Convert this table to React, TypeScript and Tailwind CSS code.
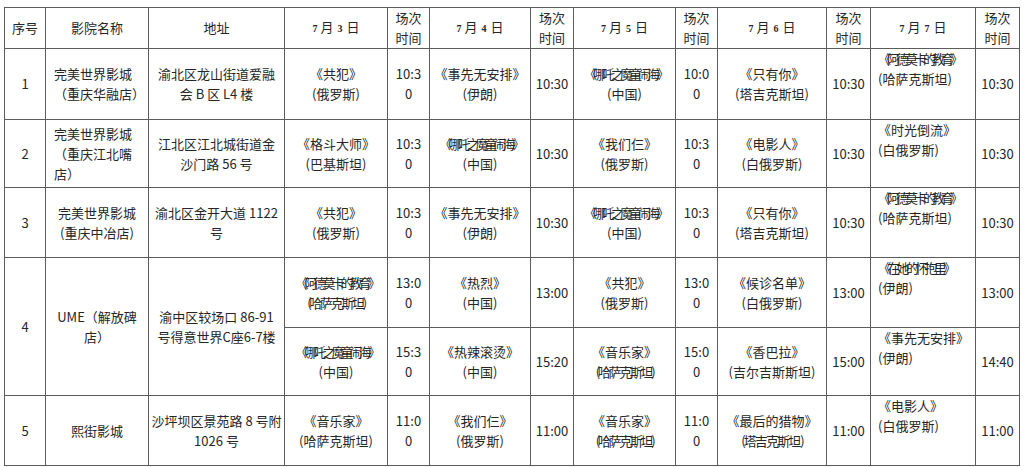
import React from "react";

type Line = string | { t: string; c: string };

const L = (t: string, c: string): Line => ({ t, c });

function Lines({ lines }: { lines: Line[] }) {
  return (
    <>
      {lines.map((l, i) => (
        <div key={i} className="whitespace-nowrap">
          {typeof l === "string" ? l : <span className={l.c}>{l.t}</span>}
        </div>
      ))}
    </>
  );
}

const td = "border border-[#5c5c5c] p-0 text-center align-middle leading-[20px]";
const tdTop = "border border-[#5c5c5c] p-0 pl-[7px] text-left align-top leading-[20px]";

const C4 = "tracking-[-4px]";
const C375 = "tracking-[-3.7px]";
const C23 = "tracking-[-2.3px]";
const C19 = "tracking-[-1.9px]";

function DateHead({ d }: { d: string }) {
  return (
    <span>
      <span className="font-['Liberation_Serif'] text-[10px] font-bold mr-[3px]">7</span>月
      <span className="font-['Liberation_Serif'] text-[10px] font-bold mx-[4px]">{d}</span>日
    </span>
  );
}

function Movie({ lines, top }: { lines: Line[]; top?: boolean }) {
  return (
    <td className={top ? tdTop : td}>
      <Lines lines={lines} />
    </td>
  );
}

function Time({ v }: { v: string }) {
  const parts = v.split("|");
  return (
    <td className={td}>
      {parts.map((p, i) => (
        <div key={i}>{p}</div>
      ))}
    </td>
  );
}

export default function App() {
  const cols = [41, 103, 136, 103, 42, 101, 43, 102, 42, 109, 44, 105, 44];
  return (
    <div className="w-[1024px] h-[467px] bg-white pl-[4px] pt-[7px] text-[13px] text-[#262626] font-['Noto_Sans_CJK_SC','Noto_Sans',sans-serif] overflow-hidden">
      <table className="table-fixed border-collapse">
        <colgroup>
          {cols.map((w, i) => (
            <col key={i} style={{ width: w }} />
          ))}
        </colgroup>
        <tbody>
          <tr className="h-[39px]">
            <td className={td}>序号</td>
            <td className={td}>影院名称</td>
            <td className={td}>地址</td>
            <td className={td}><DateHead d="3" /></td>
            <td className={td}><div>场次</div><div>时间</div></td>
            <td className={td}><DateHead d="4" /></td>
            <td className={td}><div>场次</div><div>时间</div></td>
            <td className={td}><DateHead d="5" /></td>
            <td className={td}><div>场次</div><div>时间</div></td>
            <td className={td}><DateHead d="6" /></td>
            <td className={td}><div>场次</div><div>时间</div></td>
            <td className={td}><DateHead d="7" /></td>
            <td className={td}><div>场次</div><div>时间</div></td>
          </tr>
          <tr className="h-[71px]">
            <td className={td}>1</td>
            <td className={`${td} !text-left pl-[8px]`}>
              <div>完美世界影城</div>
              <div>（重庆华融店）</div>
            </td>
            <td className={td}><Lines lines={["渝北区龙山街道爱融", "会 B 区 L4 楼"]} /></td>
            <Movie lines={["《共犯》", "(俄罗斯)"]} />
            <Time v="10:3|0" />
            <Movie lines={["《事先无安排》", "(伊朗)"]} />
            <Time v="10:30" />
            <Movie lines={[L("《哪吒之魔童闹海》", C4), "(中国)"]} />
            <Time v="10:0|0" />
            <Movie lines={["《只有你》", "(塔吉克斯坦)"]} />
            <Time v="10:30" />
            <Movie top lines={[L("《阿德莫卡的教育》", C4), "(哈萨克斯坦)"]} />
            <Time v="10:30" />
          </tr>
          <tr className="h-[68px]">
            <td className={td}>2</td>
            <td className={`${td} !text-left pl-[8px]`}>
              <div>完美世界影城</div>
              <div>（重庆江北嘴</div>
              <div>店）</div>
            </td>
            <td className={td}><Lines lines={["江北区江北城街道金", "沙门路 56 号"]} /></td>
            <Movie lines={["《格斗大师》", "(巴基斯坦)"]} />
            <Time v="10:3|0" />
            <Movie lines={[L("《哪吒之魔童闹海》", C4), "(中国)"]} />
            <Time v="10:30" />
            <Movie lines={["《我们仨》", "(俄罗斯)"]} />
            <Time v="10:3|0" />
            <Movie lines={["《电影人》", "(白俄罗斯)"]} />
            <Time v="10:30" />
            <Movie top lines={["《时光倒流》", "(白俄罗斯)"]} />
            <Time v="10:30" />
          </tr>
          <tr className="h-[70px]">
            <td className={td}>3</td>
            <td className={td}><Lines lines={["完美世界影城", "(重庆中冶店)"]} /></td>
            <td className={td}><Lines lines={["渝北区金开大道 1122", "号"]} /></td>
            <Movie lines={["《共犯》", "(俄罗斯)"]} />
            <Time v="10:3|0" />
            <Movie lines={["《事先无安排》", "(伊朗)"]} />
            <Time v="10:30" />
            <Movie lines={[L("《哪吒之魔童闹海》", C4), "(中国)"]} />
            <Time v="10:3|0" />
            <Movie lines={["《只有你》", "(塔吉克斯坦)"]} />
            <Time v="10:30" />
            <Movie top lines={[L("《阿德莫卡的教育》", C4), "(哈萨克斯坦)"]} />
            <Time v="10:30" />
          </tr>
          <tr className="h-[70px]">
            <td rowSpan={2} className={td}>4</td>
            <td rowSpan={2} className={td}><Lines lines={["UME（解放碑", "店）"]} /></td>
            <td rowSpan={2} className={td}><Lines lines={["渝中区较场口 86-91", "号得意世界C座6-7楼"]} /></td>
            <Movie lines={[L("《阿德莫卡的教育》", C4), L("(哈萨克斯坦)", C23)]} />
            <Time v="13:0|0" />
            <Movie lines={["《热烈》", "(中国)"]} />
            <Time v="13:00" />
            <Movie lines={["《共犯》", "(俄罗斯)"]} />
            <Time v="13:0|0" />
            <Movie lines={["《候诊名单》", "(白俄罗斯)"]} />
            <Time v="13:00" />
            <Movie top lines={[L("《在她的怀抱里》", C375), "(伊朗)"]} />
            <Time v="13:00" />
          </tr>
          <tr className="h-[68px]">
            <Movie lines={[L("《哪吒之魔童闹海》", C4), "(中国)"]} />
            <Time v="15:3|0" />
            <Movie lines={["《热辣滚烫》", "(中国)"]} />
            <Time v="15:20" />
            <Movie lines={["《音乐家》", L("(哈萨克斯坦)", C23)]} />
            <Time v="15:0|0" />
            <Movie lines={["《香巴拉》", "(吉尔吉斯斯坦)"]} />
            <Time v="15:00" />
            <Movie top lines={["《事先无安排》", "(伊朗)"]} />
            <Time v="14:40" />
          </tr>
          <tr className="h-[70px]">
            <td className={td}>5</td>
            <td className={td}>熙街影城</td>
            <td className={td}><Lines lines={["沙坪坝区景苑路 8 号附", "1026 号"]} /></td>
            <Movie lines={["《音乐家》", "(哈萨克斯坦)"]} />
            <Time v="11:0|0" />
            <Movie lines={["《我们仨》", "(俄罗斯)"]} />
            <Time v="11:00" />
            <Movie lines={["《音乐家》", L("(哈萨克斯坦)", C23)]} />
            <Time v="11:0|0" />
            <Movie lines={["《最后的猎物》", L("(塔吉克斯坦 )", C19)]} />
            <Time v="11:00" />
            <Movie top lines={["《电影人》", "(白俄罗斯)"]} />
            <Time v="11:00" />
          </tr>
        </tbody>
      </table>
    </div>
  );
}
